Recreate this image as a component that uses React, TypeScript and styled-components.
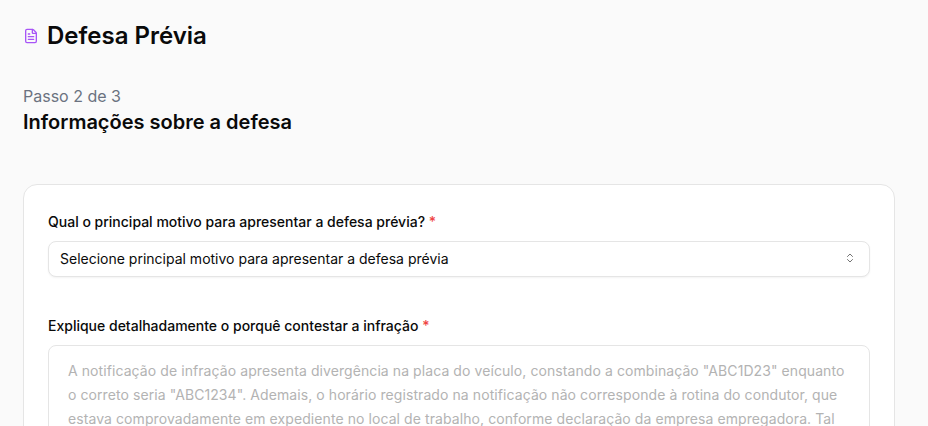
import React from 'react';
import styled, { createGlobalStyle } from 'styled-components';
import { ChevronsUpDown, FileText } from 'lucide-react';

const GlobalStyle = createGlobalStyle`
  html, body {
    margin: 0;
    height: 100%;
    overflow: hidden;
    background: #fafafa;
  }
  body {
    font-family: Inter, "Liberation Sans", sans-serif;
    color: #0a0a0a;
  }
`;

const Page = styled.main`
  display: flex;
  flex-direction: column;
  padding: 20px 33px 0 23px;
`;

const TitleRow = styled.header`
  display: flex;
  align-items: center;
  gap: 8px;
  height: 32px;
`;

const TitleIcon = styled(FileText)`
  width: 16px;
  height: 16px;
  color: #a855f7;
`;

const Title = styled.h1`
  margin: 0;
  font-size: 24px;
  line-height: 32px;
  font-weight: 600;
`;

const StepBlock = styled.section`
  margin-top: 32px;
`;

const StepCount = styled.p`
  margin: 0;
  font-size: 16px;
  line-height: 24px;
  color: #6b7280;
`;

const StepTitle = styled.h2`
  margin: 0;
  font-size: 20px;
  line-height: 28px;
  font-weight: 600;
`;

const Card = styled.form`
  display: flex;
  flex-direction: column;
  gap: 39px;
  margin-top: 48px;
  padding: 27px 24px 24px;
  background: #fff;
  border: 1px solid #e5e5e5;
  border-radius: 14px;
`;

const Field = styled.div`
  display: flex;
  flex-direction: column;
  gap: 9px;
`;

const Label = styled.label`
  font-size: 14px;
  line-height: 20px;
  font-weight: 500;
`;

const Required = styled.span`
  color: #ef4444;
`;

const SelectBox = styled.div`
  box-sizing: border-box;
  display: flex;
  align-items: center;
  justify-content: space-between;
  height: 36px;
  padding: 0 13px 2px 11px;
  background: #fff;
  border: 1px solid #e5e5e5;
  border-radius: 8px;
  box-shadow: 0 1px 2px rgba(0, 0, 0, 0.05);
  font-size: 14px;
`;

const SelectIcon = styled(ChevronsUpDown)`
  width: 12px;
  height: 12px;
  color: #737373;
`;

const TextBox = styled.textarea`
  box-sizing: border-box;
  width: 100%;
  height: 180px;
  padding: 13px 8px 8px 19px;
  background: #fff;
  border: 1px solid #e5e5e5;
  border-radius: 8px;
  font-family: inherit;
  font-size: 14px;
  line-height: 24px;
  letter-spacing: 0.08px;
  resize: none;
  overflow: hidden;
  &::placeholder {
    color: #b3b3b3;
    opacity: 1;
  }
`;

const placeholder =
  'A notificação de infração apresenta divergência na placa do veículo, constando a combinação "ABC1D23" enquanto\no correto seria "ABC1234". Ademais, o horário registrado na notificação não corresponde à rotina do condutor, que\nestava comprovadamente em expediente no local de trabalho, conforme declaração da empresa empregadora. Tal';

export default function App() {
  return (
    <>
      <GlobalStyle />
      <Page>
        <TitleRow>
          <TitleIcon strokeWidth={2} />
          <Title>Defesa Prévia</Title>
        </TitleRow>
        <StepBlock>
          <StepCount>Passo 2 de 3</StepCount>
          <StepTitle>Informações sobre a defesa</StepTitle>
        </StepBlock>
        <Card>
          <Field>
            <Label>
              Qual o principal motivo para apresentar a defesa prévia? <Required>*</Required>
            </Label>
            <SelectBox>
              Selecione principal motivo para apresentar a defesa prévia
              <SelectIcon />
            </SelectBox>
          </Field>
          <Field>
            <Label>
              Explique detalhadamente o porquê contestar a infração <Required>*</Required>
            </Label>
            <TextBox placeholder={placeholder} readOnly />
          </Field>
        </Card>
      </Page>
    </>
  );
}
